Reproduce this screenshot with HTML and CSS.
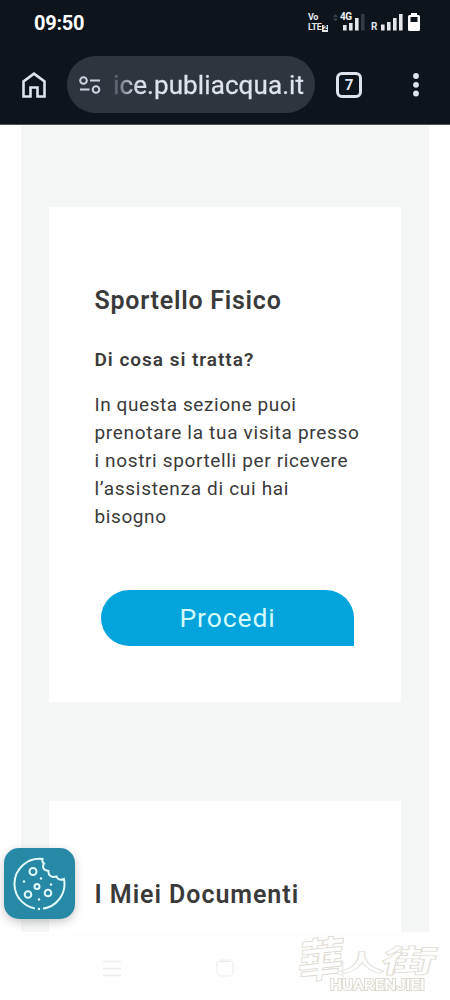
FILE: index.html
```html
<!DOCTYPE html>
<html lang="it">
<head>
<meta charset="utf-8">
<meta name="viewport" content="width=device-width">
<title>Publiacqua</title>
<link rel="stylesheet" href="styles.css">
</head>
<body>
<header class="chrome">
  <div class="status">
    <span class="clock">09:50</span>
    <div class="signals">
      <div class="volte"><span>Vo</span><span>LTE<b>2</b></span></div>
      <div class="sim">
        <svg width="32" height="20" viewBox="0 0 32 20"><path d="M0 5l2.500-3L5 5zM0 6.500l2.500 3L5 6.500z" fill="#3a4047"/><path d="M10 13h3.600v5.500H10zM16 11h3.600v7.500H16zM22 6h3.600v12.500H22z" fill="#e4e6ea"/><path d="M28 2h3.600v16.500H28z" fill="#343a42"/></svg>
        <span class="net">4G</span>
      </div>
      <span class="roam">R</span>
      <svg class="bars" width="22" height="20" viewBox="0 0 22 20"><path d="M0 12.500h3.600v6H0zM6 10h3.600v8.500H6zM12 6h3.600v12.500H12zM18 2h3.600v16.500H18z" fill="#e4e6ea"/></svg>
      <svg class="battery" width="12" height="20" viewBox="0 0 12 20"><path fill-rule="evenodd" d="M3 1h6v2h1.500Q12 3 12 4.500v13Q12 19 10.500 19h-9Q0 19 0 17.500v-13Q0 3 1.500 3H3zM2.500 5v5h7V5z" fill="#fff"/></svg>
    </div>
  </div>
  <div class="toolbar">
    <svg class="home" width="24" height="26" viewBox="0 0 24 26"><path d="M1.500 24.500V9.500L12 1.700l10.500 7.800v15h-7v-9h-7v9z" fill="none" stroke="#dee3ee" stroke-width="2.600"/></svg>
    <div class="address">
      <svg width="22" height="18" viewBox="0 0 22 18" fill="none" stroke="#cdd3df" stroke-width="2"><circle cx="4.500" cy="4.500" r="3.300"/><path d="M11 4.500h10M1 13.500h9.500"/><circle cx="17" cy="13.500" r="3.300"/></svg>
      <span class="url">ice.publiacqua.it</span>
    </div>
    <span class="tabs">7</span>
    <svg class="more" width="6" height="24" viewBox="0 0 6 24" fill="#dee3ee"><circle cx="3" cy="3" r="2.900"/><circle cx="3" cy="11.800" r="2.900"/><circle cx="3" cy="20.500" r="2.900"/></svg>
  </div>
</header>
<main class="page">
  <section class="card">
    <h2><span class="t1">Sportello Fisico</span></h2>
    <h3>Di cosa si tratta?</h3>
    <p><span class="l1">In questa sezione puoi</span><span class="l2">prenotare la tua visita presso</span><span class="l3">i nostri sportelli per ricevere</span><span class="l4">l’assistenza di cui hai</span><span class="l5">bisogno</span></p>
    <a class="button"><span>Procedi</span></a>
  </section>
  <section class="card">
    <h2><span class="t2">I Miei Documenti</span></h2>
  </section>
</main>
<div class="cookie">
  <svg width="53" height="54" viewBox="0 0 53 54" fill="none" stroke="#e2fbfa" stroke-width="2"><path d="M29.500 2A25 25 0 1 0 51 22C47 24 44.500 22 43.500 19.500C38 21 35 18 35.500 14C30 13 29 10 31 6.500C29 5 29 3.500 29.500 2Z"/><circle cx="20" cy="14.500" r="3.500"/><circle cx="24" cy="29.500" r="2.500"/><circle cx="15" cy="37.500" r="3.300"/><circle cx="35" cy="36" r="3.300"/><g fill="#e2fbfa" stroke="none"><circle cx="11" cy="24.500" r="1.200"/><circle cx="28" cy="21.500" r="1.200"/><circle cx="38" cy="27.500" r="1.200"/><circle cx="26" cy="42.500" r="1.200"/></g><path d="M22 52h8" stroke="#2789a5" stroke-width="4"/><circle cx="26" cy="52" r="1.200" fill="#e2fbfa" stroke="none"/></svg>
</div>
<footer class="nav">
  <svg class="menu" width="20" height="18" viewBox="0 0 20 18"><path d="M1 2.500h18M1 9.500h18M1 16.500h18" stroke="#ececec" stroke-width="1.500"/></svg>
  <svg class="square" width="18" height="18" viewBox="0 0 18 18"><rect x="1" y="1" width="16" height="16" rx="4" fill="none" stroke="#f2f2f2" stroke-width="1.500"/><path d="M4 2.500h10" stroke="#e8e8e8"/></svg>
  <div class="mark">
    <svg class="back" width="18" height="18" viewBox="0 0 18 18"><path d="M16 2L2 9l14 7z" fill="none" stroke="#eee" stroke-width="1.500"/></svg>
    <div class="hanzi"><span class="z1">華</span><span class="z2">人</span><span class="z3">街</span></div>
    <div class="latin">HUARENJIEI</div>
  </div>
</footer>
</body>
</html>
```
FILE: styles.css
```css
* { box-sizing: border-box; }
body { margin: 0; width: 450px; height: 1000px; overflow: hidden; display: flex; flex-direction: column; position: relative; background: #fefefe; font-family: Roboto, "Liberation Sans", sans-serif; color: #3a3a3a; }
svg { display: block; flex: none; }
.chrome { height: 125px; flex: none; background: #0d141c; border-bottom: 1px solid #4a5056; color: #dee3ee; }
.status { height: 44px; padding: 0 30px 0 34px; display: flex; justify-content: space-between; }
.clock { font-size: 20px; font-weight: 700; line-height: 24px; padding-top: 11px; color: #fff; letter-spacing: -.25px; }
.signals { display: flex; padding-top: 12px; }
.volte { width: 25px; font-size: 9px; line-height: 10px; font-weight: 700; letter-spacing: -.4px; color: #e4e6ea; }
.volte span { display: block; white-space: nowrap; height: 10px; }
.volte b { display: inline-block; background: #e4e6ea; color: #0d141c; font-size: 7px; line-height: 7px; width: 6px; margin-left: 1px; text-align: center; letter-spacing: 0; }
.sim { position: relative; width: 38px; }
.net { position: absolute; left: 7px; top: -1px; font-size: 10px; line-height: 11px; font-weight: 700; letter-spacing: -.5px; color: #f1f2f4; }
.roam { font-size: 10px; line-height: 12px; font-weight: 700; padding-top: 9px; width: 10px; }
.battery { margin-left: 5px; }
.toolbar { display: flex; align-items: center; padding: 12px 31px 0 22px; height: 69px; }
.home { margin-top: 1px; }
.address { width: 248px; height: 57px; margin-left: 21px; border-radius: 29px; background: #2f353f; display: flex; align-items: center; padding-left: 12px; }
.url { font-size: 26px; line-height: 34px; margin-left: 12px; padding-top: 1px; letter-spacing: .1px; white-space: nowrap; color: transparent; background: linear-gradient(90deg, #4a515c 0, #c8cedb 20px, #dee3ee 30px); background-clip: text; -webkit-background-clip: text; -webkit-text-stroke: .4px transparent; }
.tabs { width: 26px; height: 26px; margin-left: 21px; border: 3px solid #dee3ee; border-radius: 6px; font-size: 15px; font-weight: 700; line-height: 20px; text-align: center; }
.more { margin-left: auto; }
.page { flex: none; height: 807px; margin: 0 21px; padding: 82px 28px 0; background: #f4f7f6; overflow: hidden; }
.card { height: 495px; background: #fff; padding: 77px 46px 0 45.500px; margin-bottom: 99px; }
h2, h3, p { margin: 0; white-space: nowrap; }
h2 { font-size: 25px; line-height: 34px; font-weight: 600; }
h3 { font-size: 19px; line-height: 26px; font-weight: 600; margin-top: 29px; letter-spacing: .97px; }
p { font-size: 19px; line-height: 28px; margin-top: 18px; }
p span { display: block; }
.t1 { letter-spacing: .75px; }
.t2 { letter-spacing: .95px; }
.l1 { letter-spacing: .57px; }
.l2, .l4 { letter-spacing: .69px; }
.l3 { letter-spacing: .64px; }
.l5 { letter-spacing: .6px; }
.button { display: flex; align-items: center; justify-content: center; width: 253px; height: 56px; margin: 59px 0 0 6.500px; padding-bottom: 2px; background: #03a3dc; border-radius: 28px 28px 0 28px; color: #d4fbff; font-size: 26.500px; letter-spacing: .9px; }
.cookie { position: absolute; left: 4px; top: 848px; width: 71px; height: 71px; border-radius: 15px; background: #2789a5; display: flex; align-items: center; justify-content: center; box-shadow: 0 3px 10px rgba(0,0,0,.22); }
.nav { height: 68px; flex: none; display: flex; align-items: flex-start; padding-left: 102px; }
.menu { margin-top: 27px; }
.square { margin: 27px 0 0 94px; }
.mark { position: relative; width: 148px; margin-left: 65px; color: #fefefe; -webkit-text-stroke: 2px #e0dbd1; paint-order: stroke fill; }
.hanzi { display: flex; font-family: "Noto Sans CJK TC", sans-serif; font-weight: 500; line-height: 50px; }
.z1 { font-size: 45px; transform: rotate(-6deg) skewX(-12deg); }
.z2 { font-size: 38px; transform: translate(-1px, 4px) scale(1.15, .6); }
.z3 { font-size: 38px; transform: translate(9px, 2px) scale(1.4, .8) skewX(-8deg); }
.back { position: absolute; left: 28px; top: 28px; }
.latin { position: absolute; left: 31px; top: 43px; line-height: 20px; font-size: 15.500px; font-weight: 500; letter-spacing: .1px; transform: scaleX(1.08); transform-origin: left; }
```
